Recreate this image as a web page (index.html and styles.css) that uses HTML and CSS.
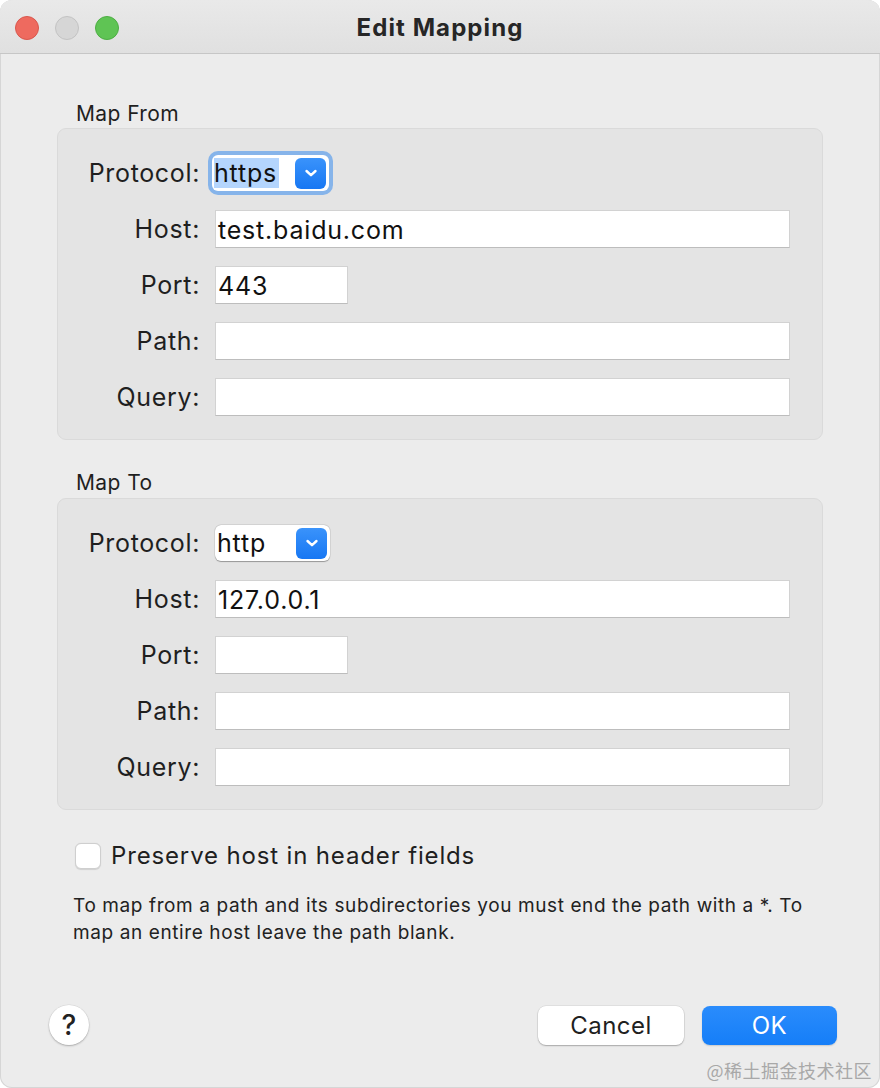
FILE: index.html
```html
<!DOCTYPE html>
<html>
<head>
<meta charset="utf-8">
<link rel="stylesheet" href="styles.css">
</head>
<body>
<div class="window">
  <div class="titlebar">
    <div class="lights">
      <span class="light red"></span>
      <span class="light gray"></span>
      <span class="light green"></span>
    </div>
    <div class="title">Edit Mapping</div>
  </div>
  <div class="content">
    <div class="section-label">Map From</div>
    <div class="group">
      <div class="label">Protocol:</div>
      <div class="popup-cell">
        <div class="focus-ring">
          <div class="popup"><span class="popup-text selected">https</span><span class="chev"><svg width="14" height="10" viewBox="0 0 14 10"><path d="M2.5 3 L7 7.2 L11.5 3" fill="none" stroke="#fff" stroke-width="2.4" stroke-linecap="round" stroke-linejoin="round"/></svg></span></div>
        </div>
      </div>
      <div class="label">Host:</div>
      <div class="field">test.baidu.com</div>
      <div class="label">Port:</div>
      <div class="field short">443</div>
      <div class="label">Path:</div>
      <div class="field"></div>
      <div class="label">Query:</div>
      <div class="field"></div>
    </div>

    <div class="section-label second">Map To</div>
    <div class="group">
      <div class="label">Protocol:</div>
      <div class="popup-cell">
        <div class="popup plain"><span class="popup-text">http</span><span class="chev"><svg width="14" height="10" viewBox="0 0 14 10"><path d="M2.5 3 L7 7.2 L11.5 3" fill="none" stroke="#fff" stroke-width="2.4" stroke-linecap="round" stroke-linejoin="round"/></svg></span></div>
      </div>
      <div class="label">Host:</div>
      <div class="field">127.0.0.1</div>
      <div class="label">Port:</div>
      <div class="field short"></div>
      <div class="label">Path:</div>
      <div class="field"></div>
      <div class="label">Query:</div>
      <div class="field"></div>
    </div>

    <div class="check-row">
      <span class="checkbox"></span>
      <span class="check-label">Preserve host in header fields</span>
    </div>
    <p class="help-text">To map from a path and its subdirectories you must end the path with a *. To map an entire host leave the path blank.</p>

    <div class="footer">
      <div class="help-btn">?</div>
      <div class="buttons">
        <div class="btn cancel">Cancel</div>
        <div class="btn ok">OK</div>
      </div>
    </div>
  </div>
  <div class="watermark">@稀土掘金技术社区</div>
</div>
</body>
</html>
```

FILE: styles.css
```css
html, body {
  margin: 0;
  padding: 0;
  background: #ffffff;
}

.window {
  position: relative;
  width: 880px;
  height: 1088px;
  box-sizing: border-box;
  background: #ececec;
  border-radius: 12px;
  overflow: hidden;
  font-family: Inter, "Liberation Sans", "Noto Sans CJK SC", sans-serif;
  color: #1f1f1f;
  box-shadow: inset 0 0 0 1px #d6d6d6;
}

.titlebar {
  position: relative;
  height: 54px;
  box-sizing: border-box;
  background: linear-gradient(#e9e9e9, #e0e0e0);
  border-bottom: 1px solid #c6c6c6;
  display: flex;
  align-items: center;
  justify-content: center;
}

.lights {
  position: absolute;
  left: 15px;
  top: 16px;
  display: flex;
  gap: 16px;
}

.light {
  width: 24px;
  height: 24px;
  border-radius: 50%;
  box-sizing: border-box;
}
.light.red { background: #ee6a5f; border: 1px solid #d9574d; }
.light.gray { background: #d6d6d6; border: 1px solid #c3c3c3; }
.light.green { background: #5fc454; border: 1px solid #4dae43; }

.title {
  font-size: 24px;
  font-weight: 700;
  color: #262626;
  letter-spacing: 1.1px;
  margin-top: 1px;
}

.content {
  padding: 47px 57px 0 57px;
}

.section-label {
  font-size: 21px;
  line-height: 26px;
  height: 26px;
  margin-left: 19px;
  margin-bottom: 1px;
  color: #1f1f1f;
  letter-spacing: 0.4px;
}
.section-label.second {
  margin-top: 30px;
  margin-bottom: 2px;
}

.group {
  box-sizing: border-box;
  background: #e4e4e4;
  border: 1px solid #dadada;
  border-radius: 9px;
  padding: 25px 32px 23px 0;
  display: grid;
  grid-template-columns: 141px 1fr;
  column-gap: 16px;
  row-gap: 18px;
  grid-auto-rows: 38px;
  align-items: center;
}

.label {
  text-align: right;
  font-size: 25px;
  color: #1f1f1f;
  letter-spacing: 0.65px;
  margin-right: -1px;
}

.field {
  height: 38px;
  box-sizing: border-box;
  background: #ffffff;
  border: 1px solid #d2d2d2;
  border-bottom-color: #bdbdbd;
  font-size: 25px;
  line-height: 38px;
  padding-left: 2px;
  color: #111;
  letter-spacing: 0.8px;
}
.field.short {
  width: 133px;
}

.popup-cell {
  display: flex;
  align-items: center;
}

.focus-ring {
  margin-left: -7px;
  padding: 4px;
  border-radius: 10px;
  background: #86b4ea;
  border: 0;
}

.popup {
  width: 117px;
  height: 36px;
  box-sizing: border-box;
  background: #ffffff;
  border-radius: 6px;
  display: flex;
  align-items: center;
  justify-content: space-between;
  padding: 0 3px 0 2px;
}
.popup.plain {
  width: 115px;
  box-shadow: 0 0.5px 1px rgba(0,0,0,0.3), 0 0 0 0.5px rgba(0,0,0,0.1);
}

.popup-text {
  font-size: 25px;
  line-height: 30px;
  color: #111;
  letter-spacing: 0.8px;
}
.popup-text.selected {
  background: #b4d5fd;
  padding-right: 2px;
}

.chev {
  width: 31px;
  height: 31px;
  border-radius: 6px;
  background: linear-gradient(#3a93fb, #1777f3);
  display: flex;
  align-items: center;
  justify-content: center;
}

.check-row {
  display: flex;
  align-items: center;
  margin-top: 31px;
  margin-left: 18px;
  gap: 10px;
}

.checkbox {
  width: 26px;
  height: 26px;
  box-sizing: border-box;
  background: #fff;
  border: 1px solid #cfcfcf;
  border-radius: 6px;
  box-shadow: 0 0.5px 1px rgba(0,0,0,0.12);
}

.check-label {
  font-size: 24px;
  color: #1f1f1f;
  letter-spacing: 0.85px;
}

.help-text {
  margin: 22px 0 0 16px;
  font-size: 19px;
  line-height: 27px;
  color: #222;
  width: 745px;
  letter-spacing: 0.6px;
}

.footer {
  margin-top: 59px;
  display: flex;
  align-items: center;
  justify-content: space-between;
  margin-left: -8px;
  margin-right: -14px;
}

.help-btn {
  width: 40px;
  height: 40px;
  border-radius: 50%;
  background: #fff;
  box-shadow: 0 1px 2px rgba(0,0,0,0.25), 0 0 0 0.5px rgba(0,0,0,0.08);
  display: flex;
  align-items: center;
  justify-content: center;
  font-size: 28px;
  font-weight: 500;
  color: #222;
}

.buttons {
  display: flex;
  gap: 18px;
}

.btn {
  height: 39px;
  box-sizing: border-box;
  border-radius: 8px;
  display: flex;
  align-items: center;
  justify-content: center;
  font-size: 24px;
  letter-spacing: 0.5px;
}
.btn.cancel {
  width: 146px;
  background: #fff;
  color: #1f1f1f;
  box-shadow: 0 1px 1.5px rgba(0,0,0,0.25), 0 0 0 0.5px rgba(0,0,0,0.1);
}
.btn.ok {
  width: 135px;
  background: linear-gradient(#2a8cfc, #157ef8);
  color: #fff;
  box-shadow: 0 1px 1.5px rgba(0,0,0,0.15);
}

.watermark {
  position: absolute;
  right: 8px;
  bottom: 5px;
  font-size: 18px;
  color: #a8a8a8;
  font-family: "Noto Sans CJK SC", sans-serif;
  letter-spacing: 0.5px;
}
```
